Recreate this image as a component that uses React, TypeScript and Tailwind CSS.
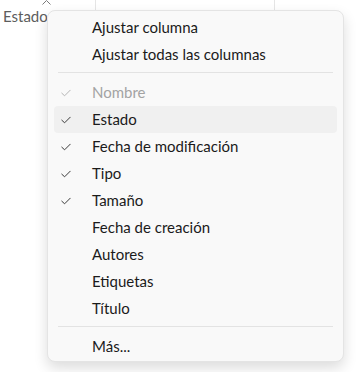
import React from "react";

const Check = ({ muted }: { muted?: boolean }) => (
  <svg width="10" height="8" viewBox="0 0 10 8" className="shrink-0">
    <path
      d="M0.8 4.2 L3.6 6.8 L9.2 1.2"
      fill="none"
      stroke={muted ? "#b4b4b4" : "#3a3a3a"}
      strokeWidth="1"
      strokeLinecap="round"
      strokeLinejoin="round"
    />
  </svg>
);

type Item = { label: string; check?: boolean; muted?: boolean; hover?: boolean };

const Row = ({ item }: { item: Item }) => (
  <div
    className={`mx-[6px] h-[27px] flex items-center rounded-[4px] ${
      item.hover ? "bg-[#f0f0f0]" : ""
    }`}
  >
    <div className="w-[38px] flex items-center pl-[7px]">
      {item.check ? <Check muted={item.muted} /> : null}
    </div>
    <span
      className={`text-[15px] leading-none whitespace-nowrap ${
        item.muted ? "text-[#a3a3a3]" : "text-[#1b1b1b]"
      }`}
    >
      {item.label}
    </span>
  </div>
);

const Sep = () => <div className="mx-[10px] mt-[4px] mb-[6px] h-px bg-[#e3e3e3]" />;

export default function App() {
  const cols: Item[] = [
    { label: "Nombre", check: true, muted: true },
    { label: "Estado", check: true, hover: true },
    { label: "Fecha de modificación", check: true },
    { label: "Tipo", check: true },
    { label: "Tamaño", check: true },
    { label: "Fecha de creación" },
    { label: "Autores" },
    { label: "Etiquetas" },
    { label: "Título" },
  ];
  return (
    <div
      className="relative w-[363px] h-[372px] bg-white overflow-hidden"
      style={{ fontFamily: 'Lato, "Noto Sans", sans-serif' }}
    >
      {/* column header behind the menu */}
      <div className="flex h-[40px] text-[15px] leading-[18px] text-[#5d5d5d] whitespace-nowrap">
        <div className="relative w-[96px] shrink-0 border-r border-[#e5e5e5] pl-[3px] pt-[7px]">
          Estado
          <svg
            width="9"
            height="5"
            viewBox="0 0 9 5"
            className="absolute left-[42px] top-0"
          >
            <path d="M0.5 4.5 L4.5 0.5 L8.5 4.5" fill="none" stroke="#7a7a7a" strokeWidth="1" />
          </svg>
        </div>
        <div className="w-[179px] shrink-0 border-r border-[#e5e5e5] pl-[8px] pt-[7px] text-[#1b1b1b]">
          Fecha de modificación
        </div>
        <div className="pl-[8px] pt-[7px] text-[#1b1b1b]">Tipo</div>
      </div>

      {/* context menu */}
      <div className="absolute left-[47px] top-[10px] w-[297px] rounded-[8px] border border-[#e4e4e4] bg-[#f9f9f9] pt-[3px] pb-[1px] shadow-[0_6px_14px_rgba(0,0,0,0.14)]">
        <Row item={{ label: "Ajustar columna" }} />
        <Row item={{ label: "Ajustar todas las columnas" }} />
        <Sep />
        {cols.map((c) => (
          <Row key={c.label} item={c} />
        ))}
        <Sep />
        <Row item={{ label: "Más..." }} />
      </div>
    </div>
  );
}
